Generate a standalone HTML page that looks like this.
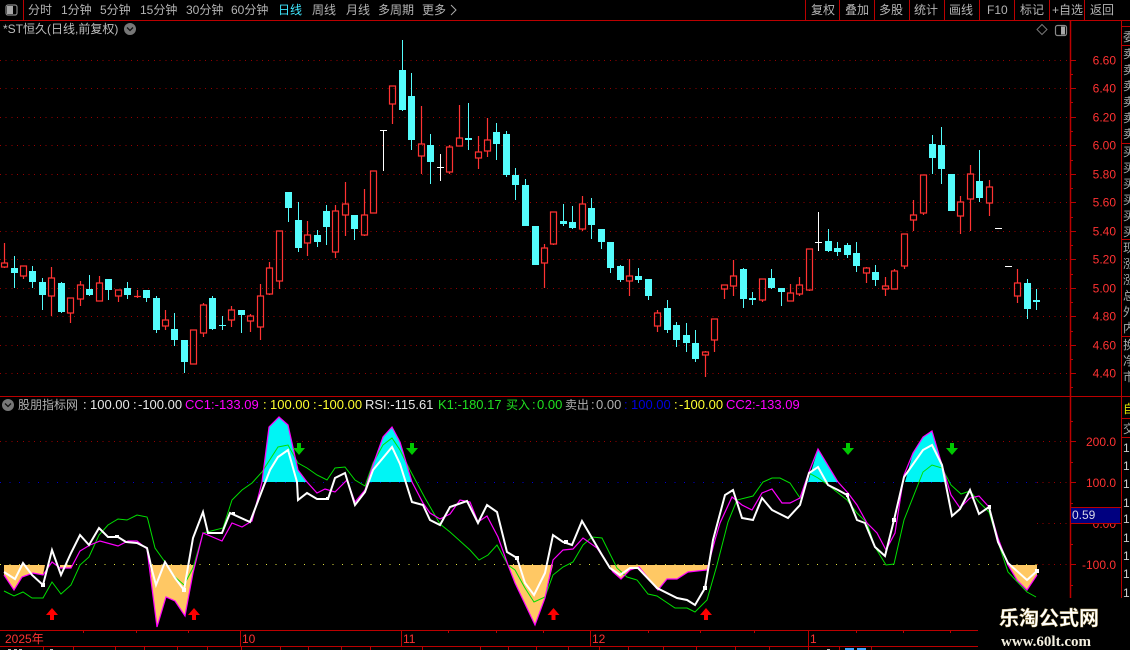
<!DOCTYPE html>
<html><head><meta charset="utf-8"><style>
html,body{margin:0;padding:0;background:#000;width:1130px;height:650px;overflow:hidden}
svg{display:block;position:absolute;left:0;top:0}
text{font-family:"Liberation Sans","WenQuanYi Zen Hei","Noto Sans CJK SC",sans-serif;font-size:12px}
.t{fill:#bdbdbd}.a{fill:#ff3232;text-anchor:end}.d{fill:#ff3232}.s{fill:#b4b4b4}
.h text{font-size:13px}.h text.c{font-size:12px}
</style></head><body>
<svg width="1130" height="650" viewBox="0 0 1130 650" xmlns="http://www.w3.org/2000/svg">
<rect width="1130" height="650" fill="#000"/>

<!-- price grid -->
<path shape-rendering="crispEdges" stroke="#960000" stroke-width="1" stroke-dasharray="1 4.7" fill="none" d="M0 60.5H1068M0 88.5H1068M0 117.5H1068M0 145.5H1068M0 174.5H1068M0 202.5H1068M0 231.5H1068M0 259.5H1068M0 288.5H1068M0 316.5H1068M0 345.5H1068M0 373.5H1068M0 441.5H1068M1037 482.5H1068M1037 523.5H1068M1037 564.5H1068"/>
<path shape-rendering="crispEdges" stroke="#0000d0" stroke-dasharray="1 8.5" fill="none" d="M0 482.5H1037"/>
<path shape-rendering="crispEdges" stroke="#e0e040" stroke-dasharray="1 8.5" fill="none" d="M0 564.5H1037"/>

<!-- white dojis -->
<path shape-rendering="crispEdges" stroke="#fff" fill="none" d="M383.5 130V171M380 130.5H387M440.5 154V181M437 167.5H444M818.5 212V251M815 242.5H822M995 228.5H1002M1005 266.5H1012"/>

<!-- cyan wicks -->
<path shape-rendering="crispEdges" stroke="#54fcfc" fill="none" d="M14.5 256V288M32.5 266V288M42.5 278V310M61.5 282V313M89.5 275V296M108.5 290V300M127.5 282V299M146.5 298V302M156.5 296V333M174.5 313V346M184.5 362V373M212.5 296V330M222.5 316V330M241.5 315V333M288.5 208V222M298.5 202V252M317.5 230V247M326.5 205V245M354.5 229V240M402.5 40V111M411.5 73V150M430.5 134V184M468.5 103V150M496.5 123V160M506.5 131V177M515.5 168V200M525.5 179V186M563.5 204V226M572.5 206V229M591.5 198V239M601.5 242V249M610.5 268V273M620.5 265V282M638.5 268V283M648.5 296V300M667.5 300V333M676.5 322V347M686.5 323V352M695.5 330V362M743.5 268V308M752.5 292V305M771.5 269V289M781.5 292V306M828.5 229V252M837.5 242V256M847.5 243V258M856.5 242V272M875.5 265V286M932.5 135V174M941.5 127V184M979.5 150V202M1027.5 279V319M1036.5 289V310"/>
<!-- cyan bodies -->
<path shape-rendering="crispEdges" stroke="#54fcfc" stroke-width="7" fill="none" d="M14.5 268V273M32.5 271V282M42.5 282V295M61.5 283V312M89.5 289V295M108.5 279V290M127.5 288V295M146.5 290V298M156.5 298V330M174.5 329V340M184.5 340V362M212.5 298V329M241.5 310V315M288.5 192V208M298.5 220V248M317.5 235V242M326.5 211V227M354.5 215V229M402.5 70V110M411.5 96V140M430.5 145V162M468.5 138V140M496.5 132V144M506.5 134V175M515.5 175V185M525.5 185V226M535.5 226V265M563.5 221V224M572.5 222V228M591.5 208V225M601.5 229V242M610.5 242V268M620.5 266V280M638.5 276V280M648.5 279V296M667.5 308V330M676.5 325V340M686.5 335V343M695.5 343V359M743.5 269V299M752.5 298V300M771.5 278V288M781.5 288V292M828.5 241V251M837.5 248V252M847.5 245V255M856.5 253V266M875.5 272V280M932.5 144V158M941.5 145V169M951.5 174V211M979.5 181V198M1027.5 283V309M1036.5 300V302M222.5 325V326"/>

<!-- red candles -->
<path stroke="#ff3232" stroke-width="1.2" fill="none" d="
M4.5 243V263M4.500 267V268M1.500 263h6v4h-6z
M23.500 276V279M20.500 266h6v10h-6z
M51.500 267V278M51.500 296V316M48.500 278h6v18h-6z
M70.500 313V323M67.500 298h6v15h-6z
M80.500 281V285M80.500 299V306M77.500 285h6v14h-6z
M99.500 276V283M96.500 283h6v18h-6z
M118.500 296V302M115.500 290h6v6h-6z
M137.500 290V298M134 296.500h7
M165.500 310V320M165.500 326V330M162.500 320h6v6h-6z
M190.500 330h6v34h-6z
M203.500 303V305M203.500 333V337M200.500 305h6v28h-6z
M231.500 306V310M231.500 320V327M228.500 310h6v10h-6z
M250.500 314V316M250.500 321V332M247.500 316h6v5h-6z
M260.500 284V296M260.500 327V340M257.500 296h6v31h-6z
M269.500 262V268M269.500 294V295M266.500 268h6v26h-6z
M279.500 281V289M276.500 231h6v50h-6z
M307.500 221V235M307.500 243V256M304.500 235h6v8h-6z
M335.500 205V211M335.500 252V258M332.500 211h6v41h-6z
M345.500 182V204M345.500 215V236M342.500 204h6v11h-6z
M364.500 189V215M364.500 235V236M361.500 215h6v20h-6z
M370.500 171h6v42h-6z
M392.500 104V124M389.500 86h6v18h-6z
M421.500 106V144M421.500 156V174M418.500 144h6v12h-6z
M449.500 145V147M449.500 172V174M446.500 147h6v25h-6z
M459.500 105V138M456.500 138h6v8h-6z
M478.500 136V152M478.500 158V169M475.500 152h6v6h-6z
M487.500 118V140M487.500 151V157M484.500 140h6v11h-6z
M544.500 244V248M544.500 263V288M541.500 248h6v15h-6z
M553.500 244V245M550.500 212h6v32h-6z
M582.500 196V204M582.500 229V231M579.500 204h6v25h-6z
M629.500 259V276M629.500 281V296M626.500 276h6v5h-6z
M657.500 310V313M657.500 326V332M654.500 313h6v13h-6z
M705.500 351V352M705.500 355V377M702.500 352h6v3h-6z
M714.500 340V352M711.500 319h6v21h-6z
M724.500 289V299M721.500 285h6v4h-6z
M733.500 260V276M733.500 286V296M730.500 276h6v10h-6z
M762.500 300V302M759.500 279h6v21h-6z
M790.500 284V293M787.500 293h6v8h-6z
M799.500 277V285M799.500 294V296M796.500 285h6v9h-6z
M809.500 290V291M806.500 249h6v41h-6z
M866.500 267V268M866.500 273V283M863.500 268h6v5h-6z
M885.500 277V286M885.500 289V296M882.500 286h6v3h-6z
M894.500 269V271M891.500 271h6v18h-6z
M904.500 266V269M901.500 234h6v32h-6z
M913.500 200V215M913.500 220V231M910.500 215h6v5h-6z
M923.500 213V215M920.500 175h6v38h-6z
M960.500 196V202M960.500 216V234M957.500 202h6v14h-6z
M970.500 165V174M970.500 199V231M967.500 174h6v25h-6z
M989.500 180V187M989.500 203V216M986.500 187h6v16h-6z
M1017.500 269V283M1017.500 296V303M1014.500 283h6v13h-6z"/>

<!-- indicator fills -->
<g fill="#00f5f5">
<path d="M262 482L269 427L279 417L288 425L298 470L307 482Z"/>
<path d="M366 482L373 465L383 437L392 427L400 442L412 482Z"/>
<path d="M808 482L818 449L838 482Z"/>
<path d="M905 482L913 453L923 437L932 431L942 465L946 482Z"/>
</g>
<g fill="#ffc864">
<path d="M4 565V575L14 590L22 577L33 573L43 575L45 565Z"/>
<path d="M60 565V568L71 568L72 565Z"/>
<path d="M150 565L152 588L157 627L166 597L175 601L185 616L193 573L195 565Z"/>
<path d="M508 565L515 583L535 625L545 598L553 565Z"/>
<path d="M610 565L613 572L621 579L630 570L639 567L658 590L667 579L677 579L688 572L707 570L708 565Z"/>
<path d="M1008 565L1017 580L1027 590L1037 575V565Z"/>
</g>

<!-- green line -->
<polyline fill="none" stroke="#00e000" stroke-width="1" points="4,591 14,596 23,592 32,598 43,598 52,582 61,594 71,585 80,565 89,557 99,535 108,525 118,519 127,520 137,515 147,517 148,520 155,548 165,562 175,577 184,585 193,568 203,533 223,528 232,500 242,490 252,483 262,472 278,447 288,445 298,463 307,468 317,475 327,480 335,468 345,467 355,480 365,486 373,463 383,445 392,438 400,450 410,470 425,498 440,524 450,532 470,550 479,560 488,555 497,545 508,565 515,570 525,588 534,602 545,597 553,575 563,567 573,562 583,545 592,537 602,538 617,568 627,577 637,580 648,594 657,596 675,608 687,608 695,612 707,600 717,565 728,522 737,500 753,496 763,482 772,478 780,478 790,483 800,498 809,473 818,478 828,485 847,500 857,513 867,523 875,547 886,565 894,564 904,520 923,472 932,465 942,468 951,485 961,494 970,491 979,502 989,512 998,542 1008,572 1027,592 1036,597"/>
<!-- magenta line -->
<polyline fill="none" stroke="#ff00ff" stroke-width="1.2" points="4,575 14,590 22,577 33,573 43,575 52,562 60,568 71,568 80,551 90,545 100,541 118,546 128,541 137,541 147,549 152,588 157,627 166,597 175,601 185,616 193,573 203,533 222,541 232,523 242,527 252,521 262,482 269,427 279,417 288,425 298,470 307,482 317,493 325,489 335,492 347,480 355,502 365,490 373,465 383,437 392,427 400,442 412,482 423,503 430,513 440,519 450,514 460,500 470,502 478,522 487,516 498,537 508,565 515,583 535,625 545,598 553,560 563,550 573,549 583,538 597,548 613,572 621,579 630,570 639,567 658,590 667,579 677,579 688,572 707,570 715,540 720,523 732,497 742,505 752,510 762,493 772,489 782,503 790,503 800,498 809,472 818,449 838,482 848,493 857,505 867,523 877,533 886,550 895,533 904,475 913,453 923,437 932,431 942,465 951,495 960,508 970,498 979,496 989,507 998,538 1008,565 1017,580 1027,590 1037,575"/>
<!-- white line -->
<polyline fill="none" stroke="#fff" stroke-width="2" points="4,572 15,579 23,563 32,575 43,585 52,550 61,575 71,553 80,535 89,545 99,528 108,537 118,537 126,542 137,543 147,548 152,570 156,585 165,562 175,578 184,590 193,538 203,512 208,533 222,533 230,513 250,522 263,488 270,470 278,457 288,450 297,482 298,500 307,493 317,499 328,499 335,478 345,473 355,505 365,492 373,470 392,447 400,464 412,502 423,505 430,520 440,525 450,507 467,501 478,523 487,505 497,512 507,552 517,558 525,583 534,595 545,573 553,535 563,542 572,545 582,521 592,538 602,555 610,568 620,575 630,568 638,568 657,588 677,598 687,600 695,605 705,588 713,540 725,495 733,490 742,518 753,520 762,498 772,510 788,518 800,505 809,473 818,467 828,485 838,490 847,495 857,520 865,523 875,547 885,556 894,520 904,477 923,450 932,445 942,465 952,516 960,509 970,490 979,514 989,507 998,542 1008,563 1027,580 1037,571"/>
<path fill="#fff" d="M41 583h4v4h-4zM182 588h4v4h-4zM988 505h3v4h-3zM846 493h3v4h-3zM703 586h4v4h-4zM892 518h4v4h-4zM1035 569h4v4h-4zM232 512h3v3h-3zM115 535h4v3h-4zM326 497h3v3h-3zM515 556h4v4h-4zM564 540h4v4h-4z"/>

<!-- arrows -->
<g fill="#ff0000">
<path d="M52 608L58 615H54V620H50V615H46Z"/>
<path d="M194 608L200 615H196V620H192V615H188Z"/>
<path d="M553.5 608L559.500 615H555.500V620H551.500V615H547.500Z"/>
<path d="M706 608L712 615H708V620H704V615H700Z"/>
</g>
<g fill="#00c800">
<path d="M299 455L293 448H297V443H301V448H305Z"/>
<path d="M412 455L406 448H410V443H414V448H418Z"/>
<path d="M848 455L842 448H846V443H850V448H854Z"/>
<path d="M952 455L946 448H950V443H954V448H958Z"/>
</g>

<!-- frame lines -->
<path shape-rendering="crispEdges" stroke="#bb0000" fill="none" d="M0 20.500H1130M23.500 0V20M805.500 0V20M839.500 0V20M874.500 0V20M909.500 0V20M944.500 0V20M979.500 0V20M1014.500 0V20M1049.500 0V20M1084.500 0V20
M0 396.500H1122M1121.500 20V598M1122 26.500H1130M1122 45.500H1130M1122 143.500H1130M1122 239.500H1130M1122 336.500H1130M1122 396.500H1130M1122 418.500H1130M1122 437.500H1130
M0 630.500H978M0 646.500H978M240.500 630V646M401.500 630V646M590.500 630V646M808.500 630V646
M83.500 630V633M136.500 630V633M188.500 630V633M448.500 630V633M496.500 630V633M543.500 630V633M648.500 630V633M700.500 630V633M754.500 630V633M856.500 630V633M903.500 630V633M950.500 630V633
M43.500 646V650M73.500 646V650M115.500 646V650M144.500 646V650M177.500 646V650M207.500 646V650M241.500 646V650M280.500 646V650M308.500 646V650M341.500 646V650M370.500 646V650M422.500 646V650M480.500 646V650M508.500 646V650M536.500 646V650M568.500 646V650M599.500 646V650M628.500 646V650M663.500 646V650M696.500 646V650M735.500 646V650M769.500 646V650M808.500 646V650M839.500 646V650M871.500 646V650
M1070 60.500H1076M1070 88.500H1076M1070 117.500H1076M1070 145.500H1076M1070 174.500H1076M1070 202.500H1076M1070 231.500H1076M1070 259.500H1076M1070 288.500H1076M1070 316.500H1076M1070 345.500H1076M1070 373.500H1076
M1070 74.500H1073M1070 102.500H1073M1070 131.500H1073M1070 160.500H1073M1070 188.500H1073M1070 217.500H1073M1070 245.500H1073M1070 274.500H1073M1070 302.500H1073M1070 331.500H1073M1070 359.500H1073M1070 387.500H1073
M1070 441.500H1076M1070 482.500H1076M1070 523.500H1076M1070 564.500H1076M1070 462.500H1073M1070 503.500H1073M1070 544.500H1073M1070 585.500H1073M1070 421.500H1073"/>
<path stroke="#bb0000" stroke-width="1.500" fill="none" d="M1070.500 20V598"/>

<!-- toolbar text -->
<text class="s" x="28" y="14">分时</text>
<text class="s" x="61" y="14">1分钟</text>
<text class="s" x="100" y="14">5分钟</text>
<text class="s" x="140" y="14">15分钟</text>
<text class="s" x="186" y="14">30分钟</text>
<text class="s" x="231" y="14">60分钟</text>
<text x="278" y="14" fill="#3fe8ff">日线</text>
<text class="s" x="312" y="14">周线</text>
<text class="s" x="346" y="14">月线</text>
<text class="s" x="378" y="14">多周期</text>
<text class="s" x="422" y="14">更多</text>
<path d="M451 5L456 10L451 15" fill="none" stroke="#aaa"/>
<text class="s" x="811" y="14">复权</text>
<text class="s" x="845" y="14">叠加</text>
<text class="s" x="879" y="14">多股</text>
<text class="s" x="914" y="14">统计</text>
<text class="s" x="949" y="14">画线</text>
<text class="s" x="987" y="14">F10</text>
<text class="s" x="1020" y="14">标记</text>
<text class="s" x="1052" y="14">+自选</text>
<text class="s" x="1090" y="14">返回</text>
<rect x="6" y="5" width="11" height="10" rx="2" fill="none" stroke="#888" stroke-width="1.200"/>
<rect x="7" y="6" width="6" height="8" fill="#a8a8a8"/>

<!-- title -->
<text class="t" x="3" y="33">*ST恒久(日线,前复权)</text>
<circle cx="130" cy="29" r="6" fill="#777"/>
<path d="M127 27.500L130 30.500L133 27.500" fill="none" stroke="#111" stroke-width="1.300"/>
<path d="M1042 24.500L1047 29.500L1042 34.500L1037 29.500Z" fill="none" stroke="#777"/>
<rect x="1055.500" y="25.500" width="11" height="10" rx="2" fill="none" stroke="#888" stroke-width="1.200"/>
<rect x="1061" y="26.500" width="4" height="8" fill="#a8a8a8"/>

<!-- axis labels -->
<text class="a" x="1116" y="64.500">6.60</text>
<text class="a" x="1116" y="92.500">6.40</text>
<text class="a" x="1116" y="121.500">6.20</text>
<text class="a" x="1116" y="149.500">6.00</text>
<text class="a" x="1116" y="178.500">5.80</text>
<text class="a" x="1116" y="206.500">5.60</text>
<text class="a" x="1116" y="235.500">5.40</text>
<text class="a" x="1116" y="263.500">5.20</text>
<text class="a" x="1116" y="292.500">5.00</text>
<text class="a" x="1116" y="320.500">4.80</text>
<text class="a" x="1116" y="349.500">4.60</text>
<text class="a" x="1116" y="377.500">4.40</text>
<text class="a" x="1116" y="446">200.0</text>
<text class="a" x="1116" y="487">100.0</text>
<text class="a" x="1116" y="528">0.00</text>
<text class="a" x="1116" y="569">-100.0</text>
<rect x="1071" y="507" width="49" height="16" fill="#000080"/>
<path shape-rendering="crispEdges" stroke="#bb0000" fill="none" d="M1071 507.500H1121M1071 523.500H1121"/>
<text x="1072" y="519" fill="#d8d8e8">0.59</text>

<!-- right column -->
<g fill="#a8a8a8">
<text x="1123" y="41">委</text>
<text x="1123" y="58">卖</text><text x="1123" y="74">卖</text><text x="1123" y="90">卖</text><text x="1123" y="106">卖</text><text x="1123" y="122">卖</text><text x="1123" y="138">卖</text>
<text x="1123" y="156">买</text><text x="1123" y="172">买</text><text x="1123" y="188">买</text><text x="1123" y="204">买</text><text x="1123" y="220">买</text><text x="1123" y="236">买</text>
<text x="1123" y="252">现</text><text x="1123" y="268">涨</text><text x="1123" y="284">涨</text><text x="1123" y="300">总</text><text x="1123" y="316">外</text><text x="1123" y="332">内</text>
<text x="1123" y="349">换</text><text x="1123" y="365">净</text><text x="1123" y="381">市</text>
</g>
<text x="1123" y="413" fill="#e0e000">自</text>
<text x="1123" y="433" fill="#a8a8a8">交</text>
<g fill="#cfcfcf">
<text x="1123" y="452">1</text><text x="1123" y="470">1</text><text x="1123" y="488">1</text><text x="1123" y="507">1</text><text x="1123" y="523">1</text><text x="1123" y="542">1</text><text x="1123" y="560">1</text><text x="1123" y="578">1</text><text x="1123" y="597">1</text>
</g>

<!-- indicator header -->
<circle cx="8" cy="405" r="6" fill="#777"/>
<path d="M5 403.500L8 406.500L11 403.500" fill="none" stroke="#111" stroke-width="1.300"/>
<g class="h">
<text class="c" x="18" y="409" fill="#b0b0b0">股朋指标网</text>
<text x="83" y="409" fill="#e8e8e8">:</text><text x="90" y="409" fill="#e8e8e8">100.00</text>
<text x="133" y="409" fill="#e8e8e8">:</text><text x="138" y="409" fill="#e8e8e8">-100.00</text>
<text x="185" y="409" fill="#ff00ff">CC1:-133.09</text>
<text x="263" y="409" fill="#ffff30">:</text><text x="270" y="409" fill="#ffff30">100.00</text>
<text x="313" y="409" fill="#ffff30">:</text><text x="318" y="409" fill="#ffff30">-100.00</text>
<text x="365" y="409" fill="#e8e8e8">RSI:-115.61</text>
<text x="438" y="409" fill="#20e020">K1:-180.17</text>
<text class="c" x="506" y="409" fill="#20e020">买入</text><text x="532" y="409" fill="#20e020">:</text><text x="537" y="409" fill="#20e020">0.00</text>
<text class="c" x="565" y="409" fill="#b0b0b0">卖出</text><text x="591" y="409" fill="#b0b0b0">:</text><text x="596" y="409" fill="#b0b0b0">0.00</text>
<text x="624" y="409" fill="#0000e0">:</text><text x="631" y="409" fill="#0000e0">100.00</text>
<text x="674" y="409" fill="#ffff30">:</text><text x="679" y="409" fill="#ffff30">-100.00</text>
<text x="726" y="409" fill="#ff00ff">CC2:-133.09</text>
</g>

<!-- x axis labels -->
<text class="d" x="5" y="643">2025年</text>
<text class="d" x="242" y="643">10</text>
<text class="d" x="403" y="643">11</text>
<text class="d" x="592" y="643">12</text>
<text class="d" x="810" y="643">1</text>
<path fill="#bbb" d="M8 649h3v1h-3zM14 649h3v1h-3zM19 649h3v1h-3zM50 649h3v1h-3zM827 649h3v1h-3z"/>
<path fill="#3fa8ff" d="M845 648h9v2h-9zM857 648h9v2h-9z"/>

<!-- watermark -->
<rect x="978" y="600" width="152" height="50" fill="#000"/>
<text x="999" y="625" style="font-family:'Noto Sans CJK SC',sans-serif;font-size:20px;font-weight:700" fill="#fff" stroke="#c8b070" stroke-width="0.400">乐淘公式网</text>
<text x="1001" y="646" style="font-family:'Liberation Serif',serif;font-size:15px;font-weight:700" fill="#f4f0e0">www.60lt.com</text>
</svg>
</body></html>
